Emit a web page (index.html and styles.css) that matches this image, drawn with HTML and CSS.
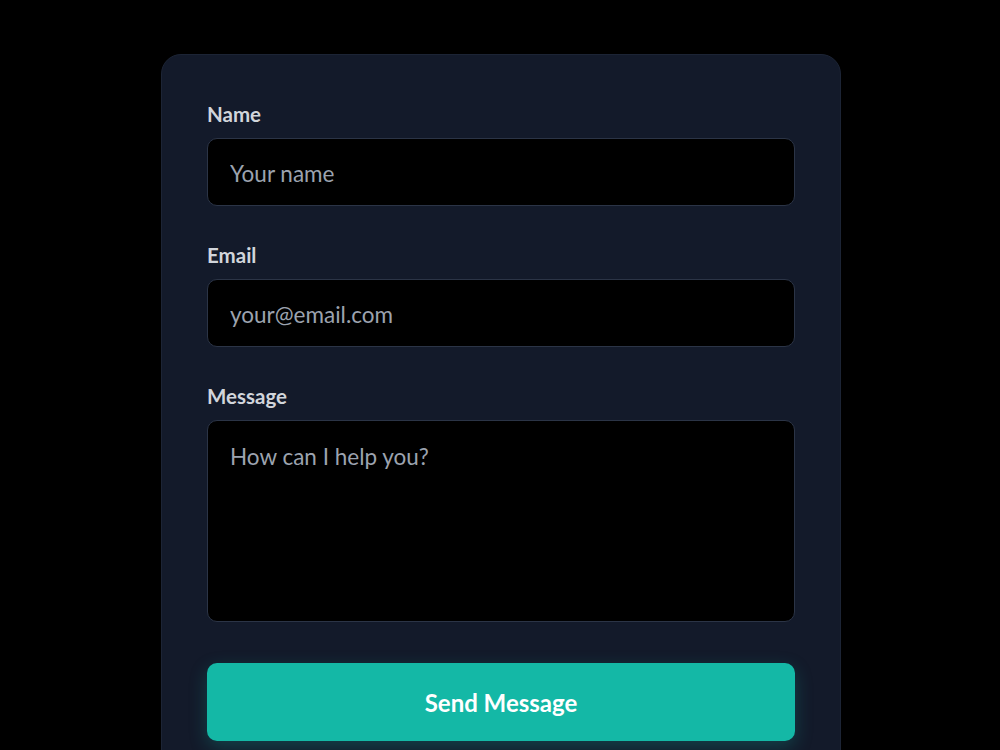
FILE: index.html
```html
<!DOCTYPE html>
<html lang="en">
<head>
    <meta charset="UTF-8">
    <meta name="viewport" content="width=device-width, initial-scale=1.0">
    <title>Contact</title>
    <link rel="stylesheet" href="styles.css">
</head>
<body>

    <div class="page">
        <form class="contact-card">
            <div class="field">
                <label for="name">Name</label>
                <input type="text" id="name" placeholder="Your name">
            </div>
            <div class="field">
                <label for="email">Email</label>
                <input type="email" id="email" placeholder="your@email.com">
            </div>
            <div class="field">
                <label for="message">Message</label>
                <textarea id="message" placeholder="How can I help you?"></textarea>
            </div>
            <button type="submit" class="send-btn">Send Message</button>
        </form>
    </div>

</body>
</html>
```

FILE: styles.css
```css
body { font-family: 'Lato', sans-serif; background-color: #000; margin: 0; }
.page { display: flex; justify-content: center; padding: 54px 20px 40px 22px; }
.contact-card { width: 680px; box-sizing: border-box; background: #131a2a; border: 1px solid #1c2435; border-radius: 20px; padding: 46px 45px; display: flex; flex-direction: column; }
.field { display: flex; flex-direction: column; margin-bottom: 36px; }
.field:last-of-type { margin-bottom: 41px; }
.field label { font-size: 20.5px; font-weight: 700; color: #d1d5db; line-height: 27px; margin-bottom: 10px; }
.field input, .field textarea { font-family: inherit; font-size: 22.5px; color: #e5e7eb; background: #000; border: 1px solid #2b3446; border-radius: 10px; padding: 0 22px; box-sizing: border-box; outline: none; }
.field input { height: 68px; padding-top: 2px; }
.field textarea { height: 202px; padding-top: 21px; line-height: 30px; resize: none; }
.field input::placeholder, .field textarea::placeholder { color: #9ca3af; }
.send-btn { font-family: inherit; height: 78px; padding-top: 2px; background: #14b8a6; color: #fff; border: none; border-radius: 10px; font-size: 24px; font-weight: 700; cursor: pointer; box-shadow: 0 6px 18px rgba(20, 184, 166, 0.25); }
```
